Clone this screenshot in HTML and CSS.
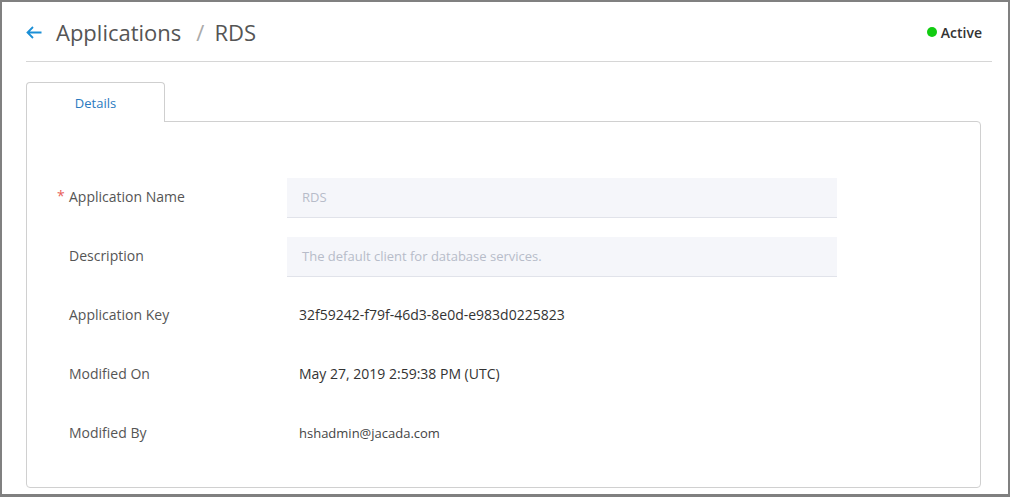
FILE: index.html
```html
<!DOCTYPE html>
<html>
<head>
<meta charset="utf-8">
<link rel="stylesheet" href="styles.css">
</head>
<body>
<div class="frame">
  <div class="header">
    <a class="back" href="#">
      <svg width="16" height="13" viewBox="0 0 16 13"><path d="M15.5 6.5H1.5 M7 1L1.5 6.5L7 12" fill="none" stroke="#1b8fd6" stroke-width="1.8"/></svg>
    </a>
    <h1 class="title"><span class="crumb">Applications</span><span class="sep">/</span><span class="crumb">RDS</span></h1>
    <div class="status"><span class="dot"></span>Active</div>
  </div>
  <div class="tabs">
    <div class="tab">Details</div>
  </div>
  <div class="panel">
    <div class="row">
      <div class="label"><span class="req">*</span>Application Name</div>
      <div class="input">RDS</div>
    </div>
    <div class="row">
      <div class="label">Description</div>
      <div class="input">The default client for database services.</div>
    </div>
    <div class="row">
      <div class="label">Application Key</div>
      <div class="value">32f59242-f79f-46d3-8e0d-e983d0225823</div>
    </div>
    <div class="row">
      <div class="label">Modified On</div>
      <div class="value">May 27, 2019 2:59:38 PM (UTC)</div>
    </div>
    <div class="row">
      <div class="label">Modified By</div>
      <div class="value small">hshadmin@jacada.com</div>
    </div>
  </div>
</div>
</body>
</html>
```
FILE: styles.css
```css
html, body { margin: 0; padding: 0; background: #fff; }
body { font-family: "Open Sans", "DejaVu Sans", sans-serif; color: #555; }
.frame {
  box-sizing: border-box;
  width: 1010px;
  height: 497px;
  border: 2px solid #808080;
  border-bottom-width: 3px;
  padding: 0 16px 0 24px;
  overflow: hidden;
}
.header {
  box-sizing: border-box;
  height: 60px;
  padding-top: 1px;
  display: flex;
  align-items: center;
  border-bottom: 1px solid #d6d6d6;
}
.back { display: flex; align-items: center; margin-right: 14px; margin-top: 1px; }
.back svg { display: block; }
.title {
  margin: 0;
  font-size: 22px;
  font-weight: 400;
  color: #555;
  flex: 1;
  display: flex;
  align-items: center;
}
.sep { color: #aaa; margin: 0 10px 0 15px; }
.status {
  display: flex;
  align-items: center;
  font-size: 14px;
  font-weight: 600;
  color: #333;
  margin-right: 10px;
}
.dot {
  width: 10px; height: 10px; border-radius: 50%;
  background: #11cc11;
  margin-right: 4px;
}
.tabs { margin-top: 20px; display: flex; }
.tab {
  box-sizing: border-box;
  width: 139px;
  height: 40px;
  border: 1px solid #cfcfcf;
  border-bottom: none;
  border-radius: 4px 4px 0 0;
  background: #fff;
  color: #2a7ac0;
  font-size: 13px;
  display: flex;
  align-items: center;
  justify-content: center;
  margin-bottom: -1px;
  position: relative;
  z-index: 1;
}
.panel {
  box-sizing: border-box;
  height: 367px;
  margin-right: 11px;
  border: 1px solid #d0d0d0;
  border-radius: 0 4px 4px 4px;
  padding: 56px 0 0 42px;
  display: flex;
  flex-direction: column;
  gap: 19px;
}
.row { display: flex; align-items: center; height: 40px; }
.label {
  width: 218px;
  font-size: 14px;
  color: #555;
  position: relative;
  padding-bottom: 4px;
}
.req {
  position: absolute;
  left: -12px;
  top: -1px;
  color: #e8605a;
}
.input {
  box-sizing: border-box;
  width: 550px;
  height: 40px;
  background: #f5f6fa;
  border-bottom: 1px solid #e1e3ea;
  padding-left: 15px;
  padding-bottom: 2px;
  display: flex;
  align-items: center;
  font-size: 13px;
  color: #b7bcc9;
}
.value {
  padding-left: 12px;
  padding-bottom: 4px;
  font-size: 14px;
  color: #333;
}
.value.small { font-size: 13px; color: #444; padding-bottom: 3px; }
```
